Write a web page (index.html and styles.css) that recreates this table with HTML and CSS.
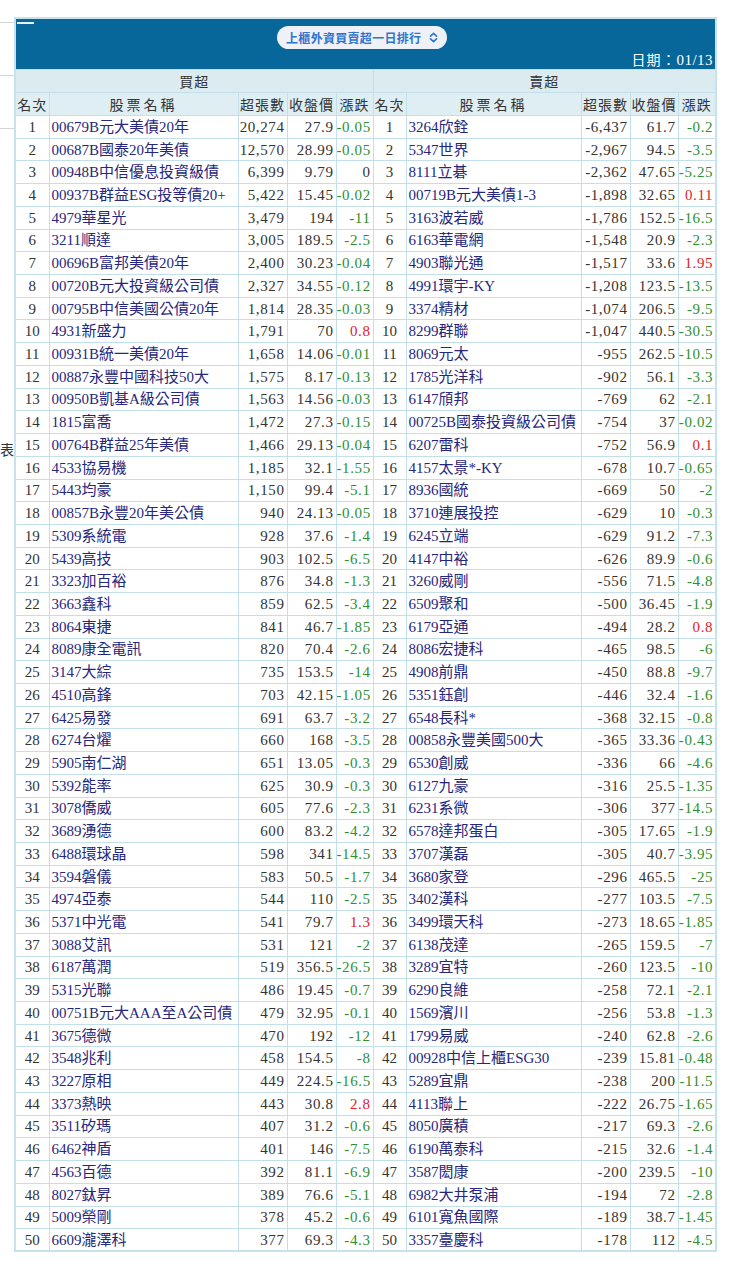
FILE: index.html
```html
<!DOCTYPE html>
<html lang="zh-Hant">
<head>
<meta charset="utf-8">
<title>上櫃外資買賣超一日排行</title>
<link rel="stylesheet" href="styles.css">
</head>
<body>
<div class="page">
  <div class="gutter">
    <div class="ln ln1"></div>
    <div class="ln ln2"></div>
    <div class="ln ln3"></div>
    <div class="stray">表</div>
  </div>
  <table class="rank">
    <colgroup>
      <col class="c-rk"><col class="c-nm"><col class="c-q"><col class="c-p"><col class="c-ch">
      <col class="c-rk2"><col class="c-nm2"><col class="c-q"><col class="c-p2"><col class="c-ch2">
    </colgroup>
    <thead>
      <tr class="top">
        <th colspan="10" class="topcell">
          <div class="mark"></div>
          <div class="pillrow">
            <div class="pill">
              <span class="pill-text">上櫃外資買賣超一日排行</span>
              <svg class="chev" width="9" height="11" viewBox="0 0 9 11"><path d="M1.5 4.2 L4.5 1.4 L7.5 4.2 M1.5 6.8 L4.5 9.6 L7.5 6.8" fill="none" stroke="#2f74d0" stroke-width="1.6" stroke-linecap="round" stroke-linejoin="round"/></svg>
            </div>
          </div>
          <div class="date">日期：<span class="num">01/13</span></div>
        </th>
      </tr>
      <tr class="sec">
        <th colspan="5">買超</th>
        <th colspan="5">賣超</th>
      </tr>
      <tr class="hd">
        <th>名次</th><th class="wide">股票名稱</th><th>超張數</th><th>收盤價</th><th>漲跌</th>
        <th>名次</th><th class="wide">股票名稱</th><th>超張數</th><th>收盤價</th><th>漲跌</th>
      </tr>
    </thead>
    <tbody>
<tr><td class="r">1</td><td class="n">00679B元大美債20年</td><td class="v">20,274</td><td class="v">27.9</td><td class="v g">-0.05</td><td class="r">1</td><td class="n">3264欣銓</td><td class="v">-6,437</td><td class="v">61.7</td><td class="v g">-0.2</td></tr>
<tr><td class="r">2</td><td class="n">00687B國泰20年美債</td><td class="v">12,570</td><td class="v">28.99</td><td class="v g">-0.05</td><td class="r">2</td><td class="n">5347世界</td><td class="v">-2,967</td><td class="v">94.5</td><td class="v g">-3.5</td></tr>
<tr><td class="r">3</td><td class="n">00948B中信優息投資級債</td><td class="v">6,399</td><td class="v">9.79</td><td class="v">0</td><td class="r">3</td><td class="n">8111立碁</td><td class="v">-2,362</td><td class="v">47.65</td><td class="v g">-5.25</td></tr>
<tr><td class="r">4</td><td class="n">00937B群益ESG投等債20+</td><td class="v">5,422</td><td class="v">15.45</td><td class="v g">-0.02</td><td class="r">4</td><td class="n">00719B元大美債1-3</td><td class="v">-1,898</td><td class="v">32.65</td><td class="v u">0.11</td></tr>
<tr><td class="r">5</td><td class="n">4979華星光</td><td class="v">3,479</td><td class="v">194</td><td class="v g">-11</td><td class="r">5</td><td class="n">3163波若威</td><td class="v">-1,786</td><td class="v">152.5</td><td class="v g">-16.5</td></tr>
<tr><td class="r">6</td><td class="n">3211順達</td><td class="v">3,005</td><td class="v">189.5</td><td class="v g">-2.5</td><td class="r">6</td><td class="n">6163華電網</td><td class="v">-1,548</td><td class="v">20.9</td><td class="v g">-2.3</td></tr>
<tr><td class="r">7</td><td class="n">00696B富邦美債20年</td><td class="v">2,400</td><td class="v">30.23</td><td class="v g">-0.04</td><td class="r">7</td><td class="n">4903聯光通</td><td class="v">-1,517</td><td class="v">33.6</td><td class="v u">1.95</td></tr>
<tr><td class="r">8</td><td class="n">00720B元大投資級公司債</td><td class="v">2,327</td><td class="v">34.55</td><td class="v g">-0.12</td><td class="r">8</td><td class="n">4991環宇-KY</td><td class="v">-1,208</td><td class="v">123.5</td><td class="v g">-13.5</td></tr>
<tr><td class="r">9</td><td class="n">00795B中信美國公債20年</td><td class="v">1,814</td><td class="v">28.35</td><td class="v g">-0.03</td><td class="r">9</td><td class="n">3374精材</td><td class="v">-1,074</td><td class="v">206.5</td><td class="v g">-9.5</td></tr>
<tr><td class="r">10</td><td class="n">4931新盛力</td><td class="v">1,791</td><td class="v">70</td><td class="v u">0.8</td><td class="r">10</td><td class="n">8299群聯</td><td class="v">-1,047</td><td class="v">440.5</td><td class="v g">-30.5</td></tr>
<tr><td class="r">11</td><td class="n">00931B統一美債20年</td><td class="v">1,658</td><td class="v">14.06</td><td class="v g">-0.01</td><td class="r">11</td><td class="n">8069元太</td><td class="v">-955</td><td class="v">262.5</td><td class="v g">-10.5</td></tr>
<tr><td class="r">12</td><td class="n">00887永豐中國科技50大</td><td class="v">1,575</td><td class="v">8.17</td><td class="v g">-0.13</td><td class="r">12</td><td class="n">1785光洋科</td><td class="v">-902</td><td class="v">56.1</td><td class="v g">-3.3</td></tr>
<tr><td class="r">13</td><td class="n">00950B凱基A級公司債</td><td class="v">1,563</td><td class="v">14.56</td><td class="v g">-0.03</td><td class="r">13</td><td class="n">6147頎邦</td><td class="v">-769</td><td class="v">62</td><td class="v g">-2.1</td></tr>
<tr><td class="r">14</td><td class="n">1815富喬</td><td class="v">1,472</td><td class="v">27.3</td><td class="v g">-0.15</td><td class="r">14</td><td class="n">00725B國泰投資級公司債</td><td class="v">-754</td><td class="v">37</td><td class="v g">-0.02</td></tr>
<tr><td class="r">15</td><td class="n">00764B群益25年美債</td><td class="v">1,466</td><td class="v">29.13</td><td class="v g">-0.04</td><td class="r">15</td><td class="n">6207雷科</td><td class="v">-752</td><td class="v">56.9</td><td class="v u">0.1</td></tr>
<tr><td class="r">16</td><td class="n">4533協易機</td><td class="v">1,185</td><td class="v">32.1</td><td class="v g">-1.55</td><td class="r">16</td><td class="n">4157太景*-KY</td><td class="v">-678</td><td class="v">10.7</td><td class="v g">-0.65</td></tr>
<tr><td class="r">17</td><td class="n">5443均豪</td><td class="v">1,150</td><td class="v">99.4</td><td class="v g">-5.1</td><td class="r">17</td><td class="n">8936國統</td><td class="v">-669</td><td class="v">50</td><td class="v g">-2</td></tr>
<tr><td class="r">18</td><td class="n">00857B永豐20年美公債</td><td class="v">940</td><td class="v">24.13</td><td class="v g">-0.05</td><td class="r">18</td><td class="n">3710連展投控</td><td class="v">-629</td><td class="v">10</td><td class="v g">-0.3</td></tr>
<tr><td class="r">19</td><td class="n">5309系統電</td><td class="v">928</td><td class="v">37.6</td><td class="v g">-1.4</td><td class="r">19</td><td class="n">6245立端</td><td class="v">-629</td><td class="v">91.2</td><td class="v g">-7.3</td></tr>
<tr><td class="r">20</td><td class="n">5439高技</td><td class="v">903</td><td class="v">102.5</td><td class="v g">-6.5</td><td class="r">20</td><td class="n">4147中裕</td><td class="v">-626</td><td class="v">89.9</td><td class="v g">-0.6</td></tr>
<tr><td class="r">21</td><td class="n">3323加百裕</td><td class="v">876</td><td class="v">34.8</td><td class="v g">-1.3</td><td class="r">21</td><td class="n">3260威剛</td><td class="v">-556</td><td class="v">71.5</td><td class="v g">-4.8</td></tr>
<tr><td class="r">22</td><td class="n">3663鑫科</td><td class="v">859</td><td class="v">62.5</td><td class="v g">-3.4</td><td class="r">22</td><td class="n">6509聚和</td><td class="v">-500</td><td class="v">36.45</td><td class="v g">-1.9</td></tr>
<tr><td class="r">23</td><td class="n">8064東捷</td><td class="v">841</td><td class="v">46.7</td><td class="v g">-1.85</td><td class="r">23</td><td class="n">6179亞通</td><td class="v">-494</td><td class="v">28.2</td><td class="v u">0.8</td></tr>
<tr><td class="r">24</td><td class="n">8089康全電訊</td><td class="v">820</td><td class="v">70.4</td><td class="v g">-2.6</td><td class="r">24</td><td class="n">8086宏捷科</td><td class="v">-465</td><td class="v">98.5</td><td class="v g">-6</td></tr>
<tr><td class="r">25</td><td class="n">3147大綜</td><td class="v">735</td><td class="v">153.5</td><td class="v g">-14</td><td class="r">25</td><td class="n">4908前鼎</td><td class="v">-450</td><td class="v">88.8</td><td class="v g">-9.7</td></tr>
<tr><td class="r">26</td><td class="n">4510高鋒</td><td class="v">703</td><td class="v">42.15</td><td class="v g">-1.05</td><td class="r">26</td><td class="n">5351鈺創</td><td class="v">-446</td><td class="v">32.4</td><td class="v g">-1.6</td></tr>
<tr><td class="r">27</td><td class="n">6425易發</td><td class="v">691</td><td class="v">63.7</td><td class="v g">-3.2</td><td class="r">27</td><td class="n">6548長科*</td><td class="v">-368</td><td class="v">32.15</td><td class="v g">-0.8</td></tr>
<tr><td class="r">28</td><td class="n">6274台燿</td><td class="v">660</td><td class="v">168</td><td class="v g">-3.5</td><td class="r">28</td><td class="n">00858永豐美國500大</td><td class="v">-365</td><td class="v">33.36</td><td class="v g">-0.43</td></tr>
<tr><td class="r">29</td><td class="n">5905南仁湖</td><td class="v">651</td><td class="v">13.05</td><td class="v g">-0.3</td><td class="r">29</td><td class="n">6530創威</td><td class="v">-336</td><td class="v">66</td><td class="v g">-4.6</td></tr>
<tr><td class="r">30</td><td class="n">5392能率</td><td class="v">625</td><td class="v">30.9</td><td class="v g">-0.3</td><td class="r">30</td><td class="n">6127九豪</td><td class="v">-316</td><td class="v">25.5</td><td class="v g">-1.35</td></tr>
<tr><td class="r">31</td><td class="n">3078僑威</td><td class="v">605</td><td class="v">77.6</td><td class="v g">-2.3</td><td class="r">31</td><td class="n">6231系微</td><td class="v">-306</td><td class="v">377</td><td class="v g">-14.5</td></tr>
<tr><td class="r">32</td><td class="n">3689湧德</td><td class="v">600</td><td class="v">83.2</td><td class="v g">-4.2</td><td class="r">32</td><td class="n">6578達邦蛋白</td><td class="v">-305</td><td class="v">17.65</td><td class="v g">-1.9</td></tr>
<tr><td class="r">33</td><td class="n">6488環球晶</td><td class="v">598</td><td class="v">341</td><td class="v g">-14.5</td><td class="r">33</td><td class="n">3707漢磊</td><td class="v">-305</td><td class="v">40.7</td><td class="v g">-3.95</td></tr>
<tr><td class="r">34</td><td class="n">3594磐儀</td><td class="v">583</td><td class="v">50.5</td><td class="v g">-1.7</td><td class="r">34</td><td class="n">3680家登</td><td class="v">-296</td><td class="v">465.5</td><td class="v g">-25</td></tr>
<tr><td class="r">35</td><td class="n">4974亞泰</td><td class="v">544</td><td class="v">110</td><td class="v g">-2.5</td><td class="r">35</td><td class="n">3402漢科</td><td class="v">-277</td><td class="v">103.5</td><td class="v g">-7.5</td></tr>
<tr><td class="r">36</td><td class="n">5371中光電</td><td class="v">541</td><td class="v">79.7</td><td class="v u">1.3</td><td class="r">36</td><td class="n">3499環天科</td><td class="v">-273</td><td class="v">18.65</td><td class="v g">-1.85</td></tr>
<tr><td class="r">37</td><td class="n">3088艾訊</td><td class="v">531</td><td class="v">121</td><td class="v g">-2</td><td class="r">37</td><td class="n">6138茂達</td><td class="v">-265</td><td class="v">159.5</td><td class="v g">-7</td></tr>
<tr><td class="r">38</td><td class="n">6187萬潤</td><td class="v">519</td><td class="v">356.5</td><td class="v g">-26.5</td><td class="r">38</td><td class="n">3289宜特</td><td class="v">-260</td><td class="v">123.5</td><td class="v g">-10</td></tr>
<tr><td class="r">39</td><td class="n">5315光聯</td><td class="v">486</td><td class="v">19.45</td><td class="v g">-0.7</td><td class="r">39</td><td class="n">6290良維</td><td class="v">-258</td><td class="v">72.1</td><td class="v g">-2.1</td></tr>
<tr><td class="r">40</td><td class="n">00751B元大AAA至A公司債</td><td class="v">479</td><td class="v">32.95</td><td class="v g">-0.1</td><td class="r">40</td><td class="n">1569濱川</td><td class="v">-256</td><td class="v">53.8</td><td class="v g">-1.3</td></tr>
<tr><td class="r">41</td><td class="n">3675德微</td><td class="v">470</td><td class="v">192</td><td class="v g">-12</td><td class="r">41</td><td class="n">1799易威</td><td class="v">-240</td><td class="v">62.8</td><td class="v g">-2.6</td></tr>
<tr><td class="r">42</td><td class="n">3548兆利</td><td class="v">458</td><td class="v">154.5</td><td class="v g">-8</td><td class="r">42</td><td class="n">00928中信上櫃ESG30</td><td class="v">-239</td><td class="v">15.81</td><td class="v g">-0.48</td></tr>
<tr><td class="r">43</td><td class="n">3227原相</td><td class="v">449</td><td class="v">224.5</td><td class="v g">-16.5</td><td class="r">43</td><td class="n">5289宜鼎</td><td class="v">-238</td><td class="v">200</td><td class="v g">-11.5</td></tr>
<tr><td class="r">44</td><td class="n">3373熱映</td><td class="v">443</td><td class="v">30.8</td><td class="v u">2.8</td><td class="r">44</td><td class="n">4113聯上</td><td class="v">-222</td><td class="v">26.75</td><td class="v g">-1.65</td></tr>
<tr><td class="r">45</td><td class="n">3511矽瑪</td><td class="v">407</td><td class="v">31.2</td><td class="v g">-0.6</td><td class="r">45</td><td class="n">8050廣積</td><td class="v">-217</td><td class="v">69.3</td><td class="v g">-2.6</td></tr>
<tr><td class="r">46</td><td class="n">6462神盾</td><td class="v">401</td><td class="v">146</td><td class="v g">-7.5</td><td class="r">46</td><td class="n">6190萬泰科</td><td class="v">-215</td><td class="v">32.6</td><td class="v g">-1.4</td></tr>
<tr><td class="r">47</td><td class="n">4563百德</td><td class="v">392</td><td class="v">81.1</td><td class="v g">-6.9</td><td class="r">47</td><td class="n">3587閎康</td><td class="v">-200</td><td class="v">239.5</td><td class="v g">-10</td></tr>
<tr><td class="r">48</td><td class="n">8027鈦昇</td><td class="v">389</td><td class="v">76.6</td><td class="v g">-5.1</td><td class="r">48</td><td class="n">6982大井泵浦</td><td class="v">-194</td><td class="v">72</td><td class="v g">-2.8</td></tr>
<tr><td class="r">49</td><td class="n">5009榮剛</td><td class="v">378</td><td class="v">45.2</td><td class="v g">-0.6</td><td class="r">49</td><td class="n">6101寬魚國際</td><td class="v">-189</td><td class="v">38.7</td><td class="v g">-1.45</td></tr>
<tr><td class="r">50</td><td class="n">6609瀧澤科</td><td class="v">377</td><td class="v">69.3</td><td class="v g">-4.3</td><td class="r">50</td><td class="n">3357臺慶科</td><td class="v">-178</td><td class="v">112</td><td class="v g">-4.5</td></tr>
    </tbody>
  </table>
</div>
</body>
</html>
```

FILE: styles.css
```css
html, body {
  margin: 0;
  padding: 0;
  background: #ffffff;
}

body {
  font-family: "Liberation Serif", "Noto Sans CJK TC", serif;
  color: #333333;
}

.page {
  display: flex;
  align-items: flex-start;
  padding-top: 17px;
}

.gutter {
  width: 14px;
  flex: none;
  display: flex;
  flex-direction: column;
}

.ln {
  height: 1px;
  background: #d4d4d4;
}

.ln1 { margin-top: 5px; }
.ln2 { margin-top: 52px; }
.ln3 { margin-top: 52px; }

.stray {
  margin-top: 312px;
  font-family: "Noto Sans CJK TC", sans-serif;
  font-size: 14px;
  line-height: 16px;
  color: #333333;
}

.rank {
  width: 702px;
  table-layout: fixed;
  border-collapse: collapse;
  border: 2px solid #c6e2ec;
}

.c-rk { width: 34px; }
.c-nm { width: 189px; }
.c-q { width: 49px; }
.c-p { width: 49px; }
.c-ch { width: 37px; }
.c-rk2 { width: 33px; }
.c-nm2 { width: 175px; }
.c-p2 { width: 48px; }
.c-ch2 { width: 38px; }

.rank th,
.rank td {
  border: 1px solid #c3dfe9;
  padding: 0;
}

.topcell {
  background: #07679a;
  height: 50px;
  vertical-align: top;
  text-align: left;
  font-weight: normal;
}

.mark {
  width: 17px;
  height: 2px;
  margin: 3px 0 0 1px;
  background: #e9f3f8;
}

.pillrow {
  display: flex;
  justify-content: center;
  padding-right: 7px;
  margin-top: 2px;
}

.pill {
  width: 170px;
  height: 23px;
  box-sizing: border-box;
  border-radius: 12px;
  background: #eef1f6;
  display: flex;
  align-items: center;
  justify-content: space-between;
  padding: 0 9px 0 9px;
}

.pill-text {
  font-family: "Noto Sans CJK TC", sans-serif;
  font-weight: 700;
  font-size: 12px;
  letter-spacing: 0.3px;
  color: #2f74d0;
  line-height: 16px;
}

.chev {
  display: block;
}

.date {
  text-align: right;
  color: #ffffff;
  font-size: 14px;
  line-height: 18px;
  padding-right: 2px;
  margin-top: 1px;
  font-family: "Noto Sans CJK TC", sans-serif;
  letter-spacing: 1px;
}

.date .num {
  font-family: "Liberation Serif", serif;
  font-size: 15px;
  letter-spacing: 0.5px;
}

.sec th {
  background: #dbebf0;
  height: 22px;
  font-family: "Noto Sans CJK TC", sans-serif;
  font-weight: normal;
  font-size: 14px;
  color: #333333;
  letter-spacing: 1px;
  text-align: center;
}

.hd th {
  background: #dfeef3;
  height: 22px;
  font-family: "Noto Sans CJK TC", sans-serif;
  font-weight: normal;
  font-size: 14px;
  color: #333333;
  letter-spacing: 1px;
  text-align: center;
  white-space: nowrap;
}

.hd th.wide {
  letter-spacing: 3px;
}

.rank tbody tr {
  height: 22.72px;
}

.rank tbody td {
  font-size: 15px;
  line-height: 18px;
  white-space: nowrap;
  overflow: hidden;
  background: #ffffff;
}

.r {
  text-align: center;
  color: #333333;
}

.n {
  text-align: left;
  padding-left: 2px !important;
  color: #26267d;
}

.v {
  text-align: right;
  padding-right: 2px !important;
  color: #333333;
  letter-spacing: 0.6px;
}

.v.g {
  color: #2f8f2f;
}

.v.u {
  color: #e3202a;
}
```
